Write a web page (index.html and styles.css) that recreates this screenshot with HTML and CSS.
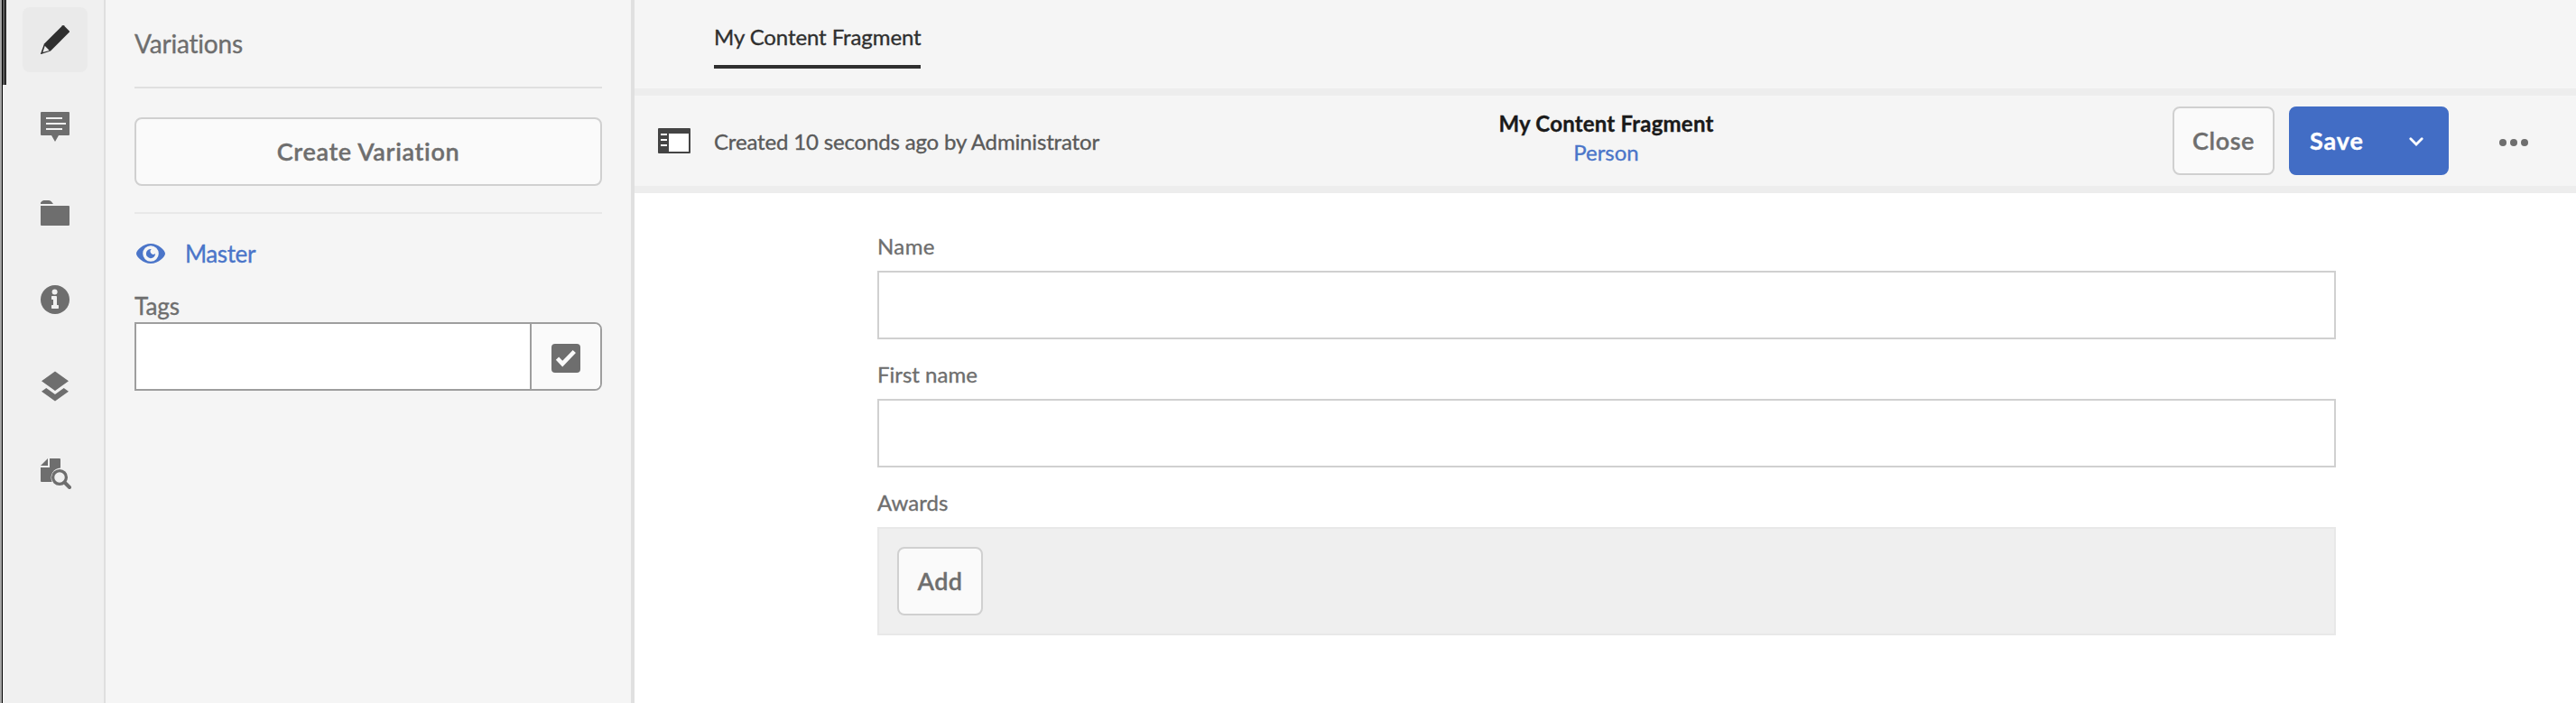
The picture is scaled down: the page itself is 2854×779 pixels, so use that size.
FILE: index.html
```html
<!DOCTYPE html>
<html lang="en">
<head>
<meta charset="utf-8">
<title>My Content Fragment</title>
<link rel="stylesheet" href="styles.css">
</head>
<body>
<div class="app">
  <nav class="rail">
    <a class="rail-item active"><svg width="32" height="32" viewBox="0 0 32 32"><path fill="#2f2f2f" d="M24.3.3a1 1 0 0 1 1.4 0l6 6a1 1 0 0 1 0 1.4L11 28.4.6 32a.5.5 0 0 1-.6-.6L4 20.600z"/><path fill="#eaeaea" d="M4.700 22.800L9.700 28 2.400 30z"/></svg></a>
    <a class="rail-item"><svg width="32" height="32" viewBox="0 0 32 32" overflow="visible"><path d="M1 0h30a1 1 0 0 1 1 1v24a1 1 0 0 1-1 1H20l-4 7-4-7H1a1 1 0 0 1-1-1V1a1 1 0 0 1 1-1z"/><path fill="#f0f0f0" d="M6 6h18v2H6zM6 12h22v2H6zM6 18h18v2H6z"/></svg></a>
    <a class="rail-item"><svg width="32" height="28" viewBox="0 0 32 28"><path d="M0 4V2.500Q1.500 0 3.500 0H9q2 0 3 1.500L14 4zM0 6h31a1 1 0 0 1 1 1v20a1 1 0 0 1-1 1H1a1 1 0 0 1-1-1z"/></svg></a>
    <a class="rail-item"><svg width="32" height="32" viewBox="0 0 32 32"><circle cx="16" cy="16" r="16"/><circle cx="15.600" cy="7.400" r="3" fill="#f0f0f0"/><path fill="#f0f0f0" d="M12.700 12H17a1 1 0 0 1 1 1v9h1.300a.7.7 0 0 1 .7.7v2.600a.7.7 0 0 1-.7.7h-6.600a.7.7 0 0 1-.7-.7v-2.600a.7.7 0 0 1 .7-.7H14v-6h-1.300a.7.7 0 0 1-.7-.7v-2.600a.7.7 0 0 1 .7-.7z"/></svg></a>
    <a class="rail-item"><svg width="32" height="34" viewBox="0 0 32 34"><path d="M16 .5L31 11.200 16 22 1 11.200zM6.300 19L16 26l9.700-7L31 22.800 16 33.500 1 22.800z"/></svg></a>
    <a class="rail-item"><svg class="find" width="34" height="34" viewBox="0 0 34 34"><path d="M8 0v8H0zM10 0h11a1 1 0 0 1 1 1v9.500A10.800 10.800 0 0 0 12.600 26H1a1 1 0 0 1-1-1V10h10z"/><circle cx="21" cy="21" r="7.400" fill="none" stroke="#6e6e6e" stroke-width="3.300"/><path d="M26.500 26.500l5.500 5.500" stroke="#6e6e6e" stroke-width="4" stroke-linecap="round"/></svg></a>
  </nav>
  <aside class="panel">
    <h2 class="panel-title"><span class="t t-variations">Variations</span></h2>
    <button class="btn create"><span class="t t-create">Create Variation</span></button>
    <div class="variation">
      <svg width="32" height="22" viewBox="0 0 32 22"><path fill="#4b75c9" fill-rule="evenodd" d="M16 0C7.500 0 0 7.500 0 11s7.500 11 16 11 16-7.500 16-11S24.500 0 16 0zm0 19.800a8.800 8.800 0 1 1 0-17.600 8.800 8.800 0 0 1 0 17.600z"/><path fill="#4b75c9" d="M16.800 6A5.100 5.100 0 1 0 21.100 11 3 3 0 0 1 16.800 6z"/></svg>
      <span class="t t-master">Master</span>
    </div>
    <label class="tags-label"><span class="t t-tags">Tags</span></label>
    <div class="tags">
      <div class="tags-input"></div>
      <div class="tags-pick"><svg width="32" height="32" viewBox="0 0 32 32"><rect width="32" height="32" rx="4"/><path fill="none" stroke="#fafafa" stroke-width="4.600" d="M6.500 16.200l5.700 5.900L25.300 8.500"/></svg></div>
    </div>
  </aside>
  <main class="main">
    <div class="tabs"><a class="tab"><span class="t t-tab">My Content Fragment</span></a></div>
    <header class="bar">
      <div class="bar-left">
        <svg width="36" height="28" viewBox="0 0 36 28"><rect width="36" height="28" rx="1" fill="#444"/><path fill="#fff" d="M12 6h22v20H12zM3 6h7v2H3zM3 12h7v2H3zM3 18h7v2H3z"/></svg>
        <span class="t t-created">Created 10 seconds ago by Administrator</span>
      </div>
      <div class="bar-title">
        <span class="t t-title">My Content Fragment</span>
        <span class="t t-person">Person</span>
      </div>
      <div class="bar-right">
        <button class="btn close"><span class="t t-close">Close</span></button>
        <button class="btn save"><span class="t t-save">Save</span><svg class="chevron" width="16" height="11" viewBox="0 0 16 11"><path d="M1.800 1.800L8 8l6.200-6.200" fill="none" stroke="#fff" stroke-width="2.800" stroke-linecap="round"/></svg></button>
        <svg class="more" width="32" height="8" viewBox="0 0 32 8"><circle cx="4" cy="4" r="4"/><circle cx="16" cy="4" r="4"/><circle cx="28" cy="4" r="4"/></svg>
      </div>
    </header>
    <form class="form">
      <label class="label"><span class="t t-name">Name</span></label>
      <div class="field"></div>
      <label class="label"><span class="t t-first">First name</span></label>
      <div class="field"></div>
      <label class="label"><span class="t t-awards">Awards</span></label>
      <div class="multi"><button type="button" class="btn add"><span class="t t-add">Add</span></button></div>
    </form>
  </main>
</div>
</body>
</html>
```
FILE: styles.css
```css
* { box-sizing: border-box; }
body { margin: 0; background: #fff; font-family: Lato, "Open Sans", sans-serif; font-variant-ligatures: none; color: #6e6e6e; }
svg { display: block; fill: #6e6e6e; flex: none; }
.app { display: flex; width: 2854px; height: 779px; overflow: hidden; }
.t { display: block; white-space: nowrap; -webkit-text-stroke: 0.35px currentColor; }

.rail { width: 117px; flex: none; padding-top: 8px; display: flex; flex-direction: column; align-items: center; gap: 24px; background: linear-gradient(90deg, #a6a6a6 0 2px, #000 2px 3px, #f0f0f0 3px); border-right: 2px solid #dfdfdf; padding-left: 7px; position: relative; }
.rail::before { content: ""; position: absolute; left: 3px; top: 0; width: 4px; height: 94px; background: linear-gradient(90deg, #565656 50%, #2b2b2b 50%); }
.rail-item { width: 72px; height: 72px; flex: none; border-radius: 8px; display: flex; align-items: center; justify-content: center; }
.rail-item.active { background: #eaeaea; }
.find { margin-left: 2px; margin-top: 2px; }

.panel { width: 586px; flex: none; background: #f5f5f5; border-right: 4px solid #e0e0e0; padding: 0 32px; }
.panel-title { margin: 0; height: 98px; border-bottom: 2px solid #e0e0e0; display: flex; align-items: center; font-weight: 400; padding-bottom: 1px; }
.btn { font: inherit; color: #6e6e6e; height: 76px; padding: 0; border: 2px solid #d0d0d0; border-radius: 8px; background: #fafafa; display: flex; align-items: center; justify-content: center; }
.create { width: 518px; margin-top: 32px; }
.variation { margin-top: 29px; border-top: 2px solid #e8e8e8; height: 90px; padding-left: 2px; display: flex; align-items: center; gap: 22px; }
.tags-label { height: 32px; padding-bottom: 5px; display: flex; align-items: center; }
.tags { display: flex; height: 76px; border: 2px solid #9e9e9e; border-radius: 0 8px 8px 0; overflow: hidden; background: #fff; }
.tags-input { flex: 1; border-right: 2px solid #9e9e9e; }
.tags-pick { width: 76px; padding-top: 4px; background: #fafafa; display: flex; align-items: center; justify-content: center; }

.main { width: 2151px; flex: none; }
.tabs { height: 106px; background: #f5f5f5; border-bottom: 8px solid #ededed; padding-left: 88px; }
.tab { display: block; width: 229px; height: 76px; border-bottom: 4px solid #2f2f2f; padding-top: 23px; }
.bar { height: 108px; background: #f5f5f5; border-bottom: 8px solid #ededed; display: grid; grid-template-columns: 1fr 300px 1fr; align-items: center; }
.bar-left { display: flex; align-items: center; gap: 26px; padding-left: 26px; }
.bar-title { display: flex; flex-direction: column; align-items: center; padding-bottom: 6px; padding-left: 2px; }
.bar-right { display: flex; align-items: center; justify-content: flex-end; padding-right: 53px; }
.close { width: 113px; }
.save { width: 177px; margin-left: 16px; margin-right: 56px; background: #426dc5; border-color: #426dc5; color: #fff; justify-content: space-between; padding: 0 26px 0 21px; }
.chevron { margin-top: 2px; }
.more { margin-top: 4px; }

.form { width: 1616px; margin-left: 269px; padding-top: 20px; }
.label { display: block; height: 66px; padding-top: 23px; }
.field { height: 76px; border: 2px solid #d0d0d0; background: #fff; }
.multi { height: 120px; border: 2px solid #e8e8e8; background: #efefef; padding: 20px; }
.add { width: 95px; }

.t-variations { font-size: 28px; line-height: 36px; letter-spacing: -0.2px; }
.t-create { font-size: 27px; line-height: 36px; font-weight: 600; letter-spacing: 0.65px; }
.t-master { font-size: 26px; line-height: 36px; letter-spacing: -0.4px; color: #4b75c9; }
.t-tags { font-size: 26px; line-height: 26px; }
.t-tab { font-size: 24px; line-height: 36px; letter-spacing: -0.1px; color: #2f2f2f; }
.t-created { font-size: 24px; line-height: 36px; letter-spacing: -0.16px; color: #5a5a5a; padding-top: 1px; }
.t-title { font-size: 24px; line-height: 32px; font-weight: 700; letter-spacing: 0.2px; color: #1a1a1a; }
.t-person { font-size: 24px; line-height: 32px; color: #4b75c9; }
.t-close { font-size: 27px; line-height: 36px; font-weight: 600; letter-spacing: 0.6px; }
.t-save { font-size: 27px; line-height: 36px; font-weight: 700; letter-spacing: 0.9px; }
.t-name, .t-first, .t-awards { font-size: 24px; line-height: 32px; }
.t-name { letter-spacing: 0.4px; }
.t-add { font-size: 27px; line-height: 36px; font-weight: 600; letter-spacing: 0.5px; }
```
